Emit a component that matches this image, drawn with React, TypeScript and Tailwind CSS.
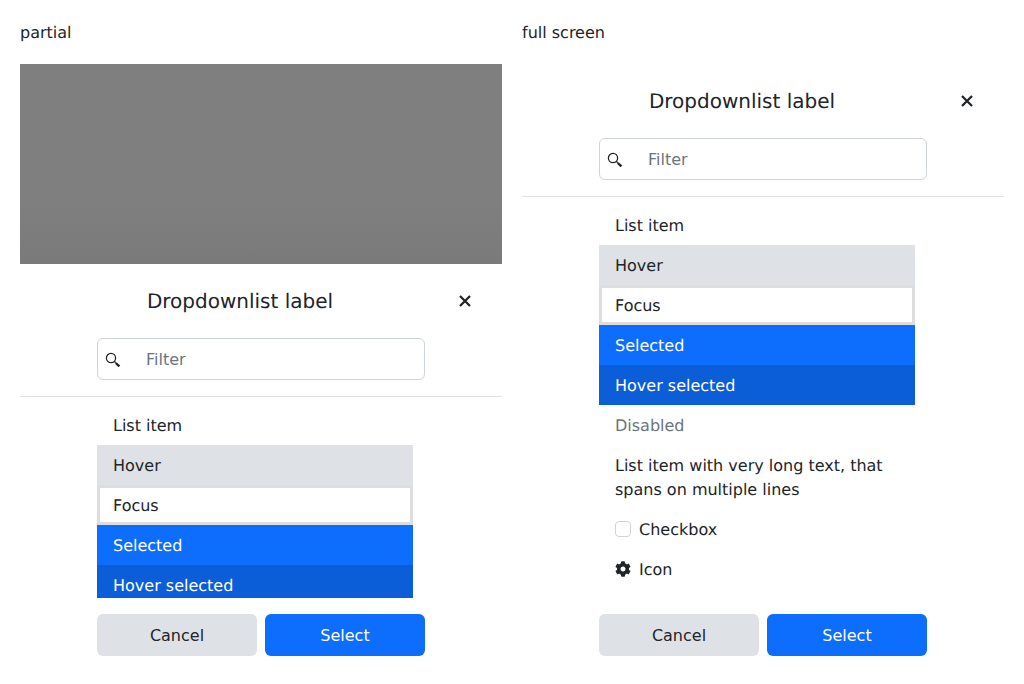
import React from "react";
import { FaCog } from "react-icons/fa";

const SearchIcon = () => (
  <svg width="16" height="16" viewBox="0 0 16 16" fill="none" stroke="currentColor">
    <circle cx="6" cy="7" r="4.6" strokeWidth="1.3" />
    <path d="M9.3 10.3l1.4 1.5" strokeWidth="1.3" />
    <path d="M10.8 12l3.6 3.4" strokeWidth="2.4" />
  </svg>
);

const CloseIcon = () => (
  <svg width="16" height="16" viewBox="0 0 16 16" fill="none" stroke="currentColor" strokeWidth="2.3">
    <path d="M3 3l10 10M13 3L3 13" />
  </svg>
);

const Dropdown = ({ listHeight }: { listHeight: string }) => {
  return (
    <div className="bg-white">
      {/* Header */}
      <div className="flex items-center px-5 pt-[22px] pb-[22px]">
        <h2 className="w-[400px] text-center text-[20px] leading-[30px]">Dropdownlist label</h2>
        <button className="ml-[17px] w-4 h-4">
          <CloseIcon />
        </button>
      </div>

      {/* Filter */}
      <div className="mx-[77px] relative">
        <span className="absolute left-[8px] top-[13px]">
          <SearchIcon />
        </span>
        <input
          type="text"
          placeholder="Filter"
          className="w-full h-[42px] border border-[#ced4da] rounded-md pl-[48px] pr-3 outline-none placeholder-[#6c757d]"
        />
      </div>
      <div className="mt-4 border-t border-[#dee2e6]" />

      {/* List */}
      <div className={`${listHeight} mt-2 ml-[77px] mr-[89px] overflow-hidden`}>
        <div className="h-10 px-4 flex items-center"><span className="pt-[2px]">List item</span></div>
        <div className="h-10 px-4 flex items-center bg-[#dee2e6]"><span className="pt-[2px]">Hover</span></div>
        <div className="h-10 px-[13px] flex items-center border-[3px] border-[#dddddd]"><span className="pt-[2px]">Focus</span></div>
        <div className="h-10 px-4 flex items-center bg-[#0d6efd] text-white"><span className="pt-[2px]">Selected</span></div>
        <div className="h-10 px-4 flex items-center bg-[#0b5ed7] text-white"><span className="pt-[2px]">Hover selected</span></div>
        <div className="h-10 px-4 flex items-center text-[#6c757d]"><span className="pt-[2px]">Disabled</span></div>
        <div className="px-4 pt-[9px] pb-[7px]">List item with very long text, that spans on multiple lines</div>
        <div className="h-10 px-4 flex items-center gap-2">
          <span className="w-4 h-4 border border-[#ced4da] rounded-[4px]" />
          <span className="pt-[2px]">Checkbox</span>
        </div>
        <div className="h-10 px-4 flex items-center gap-2">
          <span className="w-4 h-4 flex items-center justify-center"><FaCog size={16} /></span>
          <span className="pt-[2px]">Icon</span>
        </div>
      </div>

      {/* Footer */}
      <div className="mx-[77px] mt-4 flex gap-2">
        <button className="flex-1 h-[42px] pt-[2px] rounded-md bg-[#dee2e6]">Cancel</button>
        <button className="flex-1 h-[42px] pt-[2px] rounded-md bg-[#0d6efd] text-white">Select</button>
      </div>
    </div>
  );
};

export default function App() {
  return (
    <div className="grid grid-cols-2 gap-5 p-5 text-[#212529] font-['DejaVu_Sans',sans-serif] text-base leading-6 [text-rendering:geometricPrecision]">
      <div>
        <p className="pt-px mb-[19px]">partial</p>
        <div className="h-[200px] bg-linear-to-b from-[#7f7f7f] from-70% to-[#7a7a7a]" />
        <Dropdown listHeight="h-[193px]" />
      </div>
      <div>
        <p className="pt-px mb-[19px]">full screen</p>
        <Dropdown listHeight="h-[393px]" />
      </div>
    </div>
  );
}
